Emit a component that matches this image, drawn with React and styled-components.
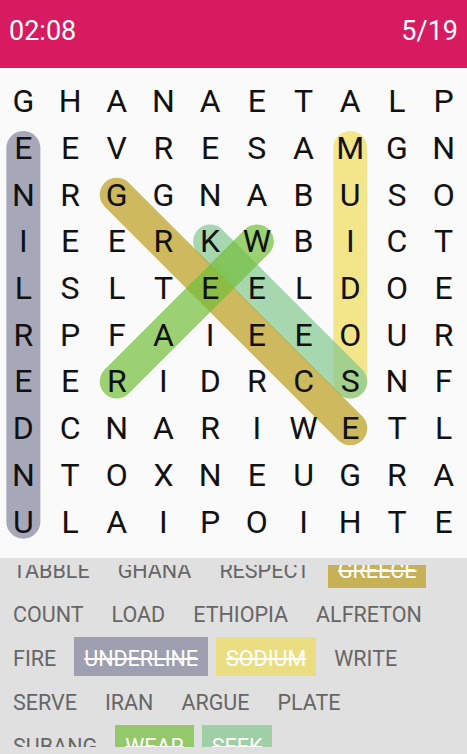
import React from "react";
import styled, { createGlobalStyle } from "styled-components";

const GlobalStyle = createGlobalStyle`
  html, body { margin: 0; padding: 0; }
  body { font-family: Roboto, "Noto Sans", sans-serif; background: #e0e0e0; }
  #root { height: 100vh; }
`;

const Screen = styled.div`
  height: 100vh;
  display: flex;
  flex-direction: column;
  overflow: hidden;
`;

const Header = styled.header`
  flex: 0 0 68px;
  box-sizing: border-box;
  background: #d81b60;
  color: #fff;
  display: flex;
  align-items: center;
  justify-content: space-between;
  padding: 0 9px 6px 9px;
  font-family: Roboto, sans-serif;
  font-size: 27px;
`;

const Board = styled.section`
  flex: 0 0 490px;
  box-sizing: border-box;
  background: #fafafa;
  padding-top: 10px;
`;

const GridWrap = styled.div`
  position: relative;
  width: 467px;
  height: 467px;
`;

const Marks = styled.svg`
  position: absolute;
  inset: 0;
  width: 100%;
  height: 100%;
  z-index: 0;
`;

const Grid = styled.div`
  position: relative;
  z-index: 1;
  display: grid;
  grid-template-columns: repeat(10, 1fr);
  grid-auto-rows: 46.7px;
`;

const Cell = styled.div`
  display: flex;
  align-items: center;
  justify-content: center;
  font-family: Roboto, sans-serif;
  font-size: 32px;
  color: #111;
`;

const WordPanel = styled.section`
  flex: 1;
  display: flex;
  flex-direction: column;
  box-sizing: border-box;
  background: #e0e0e0;
  padding: 7px 0;
  min-height: 0;
`;

const WordViewport = styled.div`
  flex: 1;
  overflow: hidden;
`;

const WordList = styled.div`
  margin-top: -16px;
  padding-left: 3px;
  display: flex;
  flex-direction: column;
  gap: 5px;
`;

const WordRow = styled.div`
  display: flex;
  gap: 8px;
  height: 39px;
`;

const Word = styled.span`
  box-sizing: border-box;
  height: 39px;
  padding: 4px 10px 0 10px;
  line-height: 35px;
  font-family: Roboto, sans-serif;
  font-size: 21.5px;
  white-space: nowrap;
  color: ${(p) => (p.$color ? "#fff" : "#666")};
  background: ${(p) => p.$color || "transparent"};
  text-decoration: ${(p) => (p.$color ? "line-through" : "none")};
`;

const LETTERS = [
  "GHANAETALP",
  "EEVRESAMGN",
  "NRGGNABUSO",
  "IEERKWBICT",
  "LSLTEELDOE",
  "RPFAIEEOUR",
  "EERIDRCSNF",
  "DCNARIWETL",
  "NTOXNEUGRA",
  "ULAIPOIHTE",
];

const C = {
  gray: "rgba(129,133,157,0.7)",
  yellow: "rgba(240,219,90,0.7)",
  olive: "rgba(186,157,29,0.7)",
  seek: "rgba(129,200,143,0.7)",
  wear: "rgba(114,189,57,0.7)",
};

const FOUND = [
  { from: [1, 0], to: [9, 0], color: C.gray },
  { from: [1, 7], to: [6, 7], color: C.yellow },
  { from: [3, 4], to: [6, 7], color: C.seek },
  { from: [2, 2], to: [7, 7], color: C.olive },
  { from: [3, 5], to: [6, 2], color: C.wear },
];

const WORDS = [
  [["TABBLE"], ["GHANA"], ["RESPECT"], ["GREECE", C.olive]],
  [["COUNT"], ["LOAD"], ["ETHIOPIA"], ["ALFRETON"]],
  [["FIRE"], ["UNDERLINE", C.gray], ["SODIUM", C.yellow], ["WRITE"]],
  [["SERVE"], ["IRAN"], ["ARGUE"], ["PLATE"]],
  [["SUBANG"], ["WEAR", C.wear], ["SEEK", C.seek]],
];

const S = 46.7;
const pos = (i) => S / 2 + S * i;

export default function App() {
  return (
    <>
      <GlobalStyle />
      <Screen>
        <Header>
          <span>02:08</span>
          <span>5/19</span>
        </Header>
        <Board>
          <GridWrap>
            <Marks viewBox="0 0 467 467">
              {FOUND.map((f, i) => (
                <line
                  key={i}
                  x1={pos(f.from[1])}
                  y1={pos(f.from[0])}
                  x2={pos(f.to[1])}
                  y2={pos(f.to[0])}
                  stroke={f.color}
                  strokeWidth="34"
                  strokeLinecap="round"
                />
              ))}
            </Marks>
            <Grid>
              {LETTERS.map((row, r) =>
                row.split("").map((ch, c) => <Cell key={r + "-" + c}>{ch}</Cell>)
              )}
            </Grid>
          </GridWrap>
        </Board>
        <WordPanel>
          <WordViewport>
            <WordList>
              {WORDS.map((row, i) => (
                <WordRow key={i}>
                  {row.map(([w, color]) => (
                    <Word key={w} $color={color}>
                      {w}
                    </Word>
                  ))}
                </WordRow>
              ))}
            </WordList>
          </WordViewport>
        </WordPanel>
      </Screen>
    </>
  );
}
